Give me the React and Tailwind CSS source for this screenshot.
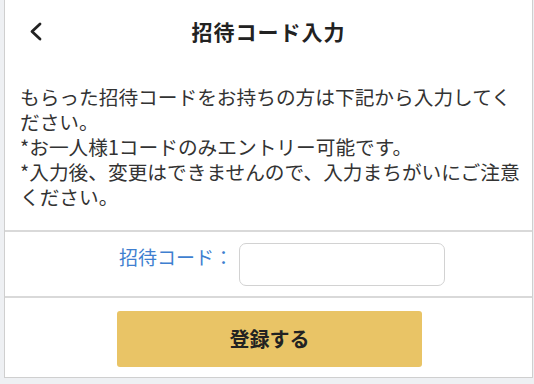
import { useState } from "react";

const font = { fontFamily: '"Noto Sans CJK JP", "Noto Sans", sans-serif' };

const BackIcon = () => (
  <svg width="14" height="19" viewBox="0 0 14 19" fill="none">
    <polyline
      points="11,2 3,9.5 11,17"
      stroke="#222"
      strokeWidth="2.8"
      strokeLinecap="round"
      strokeLinejoin="round"
    />
  </svg>
);

export default function App() {
  const [code, setCode] = useState("");

  return (
    <div className="h-[384px] bg-[#eef0f3] pl-[4px] pr-[1px]" style={font}>
      <div className="bg-white border-l border-r border-b border-[#cfcfcf]">
        {/* Header */}
        <div className="relative h-[64px] flex items-center justify-center">
          <button className="absolute left-[24px] top-[22px] p-0">
            <BackIcon />
          </button>
          <h1 className="text-[21px] font-bold text-[#222] tracking-[1px]">招待コード入力</h1>
        </div>

        {/* Description */}
        <p className="pl-[15px] pr-[2px] pt-[20px] pb-[21px] text-[19.7px] leading-[25px] text-[#333]">
          もらった招待コードをお持ちの方は下記から入力してください。
          <br />
          *お一人様1コードのみエントリー可能です。
          <br />
          *入力後、変更はできませんので、入力まちがいにご注意ください。
        </p>

        {/* Code input */}
        <div className="border-t-2 border-b-2 border-[#d9d9d9] h-[68px] flex items-center pl-[114px]">
          <label className="text-[19px] text-[#3f7fd0] w-[120px] mb-[14px]">招待コード：</label>
          <input
            type="text"
            value={code}
            onChange={(e) => setCode(e.target.value)}
            className="w-[206px] h-[43px] rounded-[7px] border-[1.5px] border-[#d2d2d2] px-2 text-[18px] outline-none"
          />
        </div>

        {/* Submit */}
        <div className="pt-[13px] pb-[10px] pl-[112px]">
          <button className="w-[305px] h-[56px] bg-[#e9c466] rounded-[3px] text-[20px] font-bold text-[#222]">
            登録する
          </button>
        </div>
      </div>
    </div>
  );
}
